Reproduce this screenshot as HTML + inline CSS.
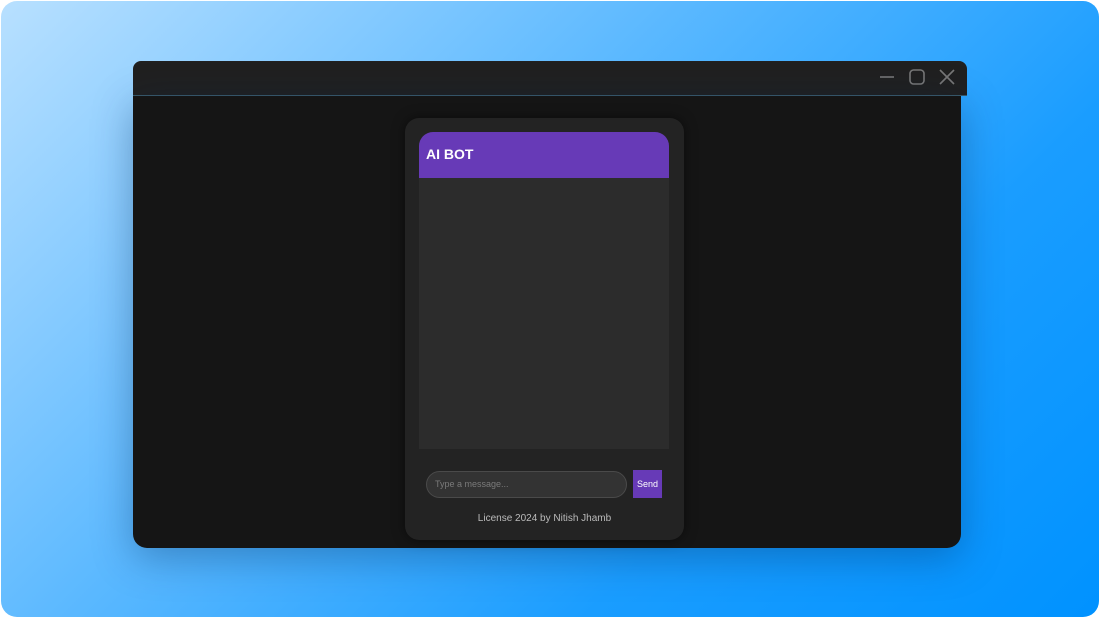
<!DOCTYPE html>
<html><head><style>
html,body{margin:0;padding:0;width:1100px;height:618px;overflow:hidden;background:#fff;font-family:"Liberation Sans",sans-serif}
.bg{position:absolute;left:1px;top:1px;width:1098px;height:616px;border-radius:16px;background:linear-gradient(135deg,#b8e0ff 0%,#5ab8ff 40%,#1a9dff 70%,#0092ff 100%);overflow:hidden}
.tb{position:absolute;left:133px;top:61px;width:834px;height:34px;background:#202020;border-radius:8px 8px 0 0;border-bottom:1px solid #3a5a6a}
.win{position:absolute;left:133px;top:96px;width:828px;height:452px;background:#151515;border-radius:0 0 14px 14px;box-shadow:0 10px 40px rgba(0,40,90,.35)}
.card{position:absolute;left:405px;top:118px;width:279px;height:422px;background:#232323;border-radius:14px;box-shadow:0 0 12px rgba(0,0,0,.5)}
.hd{position:absolute;left:419px;top:132px;width:250px;height:46px;background:#673ab7;border-radius:14px 14px 0 0;color:#fff;font-weight:bold;font-size:14px;line-height:44px;box-sizing:border-box;padding-left:7px}
.msg{position:absolute;left:419px;top:178px;width:250px;height:271px;background:#2c2c2c}
.inp{position:absolute;left:426px;top:471px;width:201px;height:27px;box-sizing:border-box;background:#333;border:1px solid #4a4a4a;border-radius:14px;color:#7a7a7a;font-size:9px;line-height:25px;padding-left:8px}
.send{position:absolute;left:633px;top:470px;width:29px;height:28px;background:#673ab7;color:#fff;font-size:9px;line-height:28px;text-align:center}
.lic{position:absolute;left:405px;width:279px;top:513px;text-align:center;color:#bbb;font-size:10px}
</style></head><body>
<div class="bg">
</div>
<div class="tb"></div>
<svg style="position:absolute;left:870px;top:64px" width="100" height="30">
<line x1="10" y1="13" x2="24" y2="13" stroke="#777" stroke-width="1.6"/>
<rect x="40" y="6" width="14" height="14" rx="3.5" fill="none" stroke="#777" stroke-width="1.6"/>
<path d="M70 6 L84 20 M84 6 L70 20" stroke="#777" stroke-width="1.6"/>
</svg>
<div class="win"></div>
<div class="card"></div>
<div class="hd">AI BOT</div>
<div class="msg"></div>
<div class="inp">Type a message...</div>
<div class="send">Send</div>
<div class="lic">License 2024 by Nitish Jhamb</div>
</body></html>
